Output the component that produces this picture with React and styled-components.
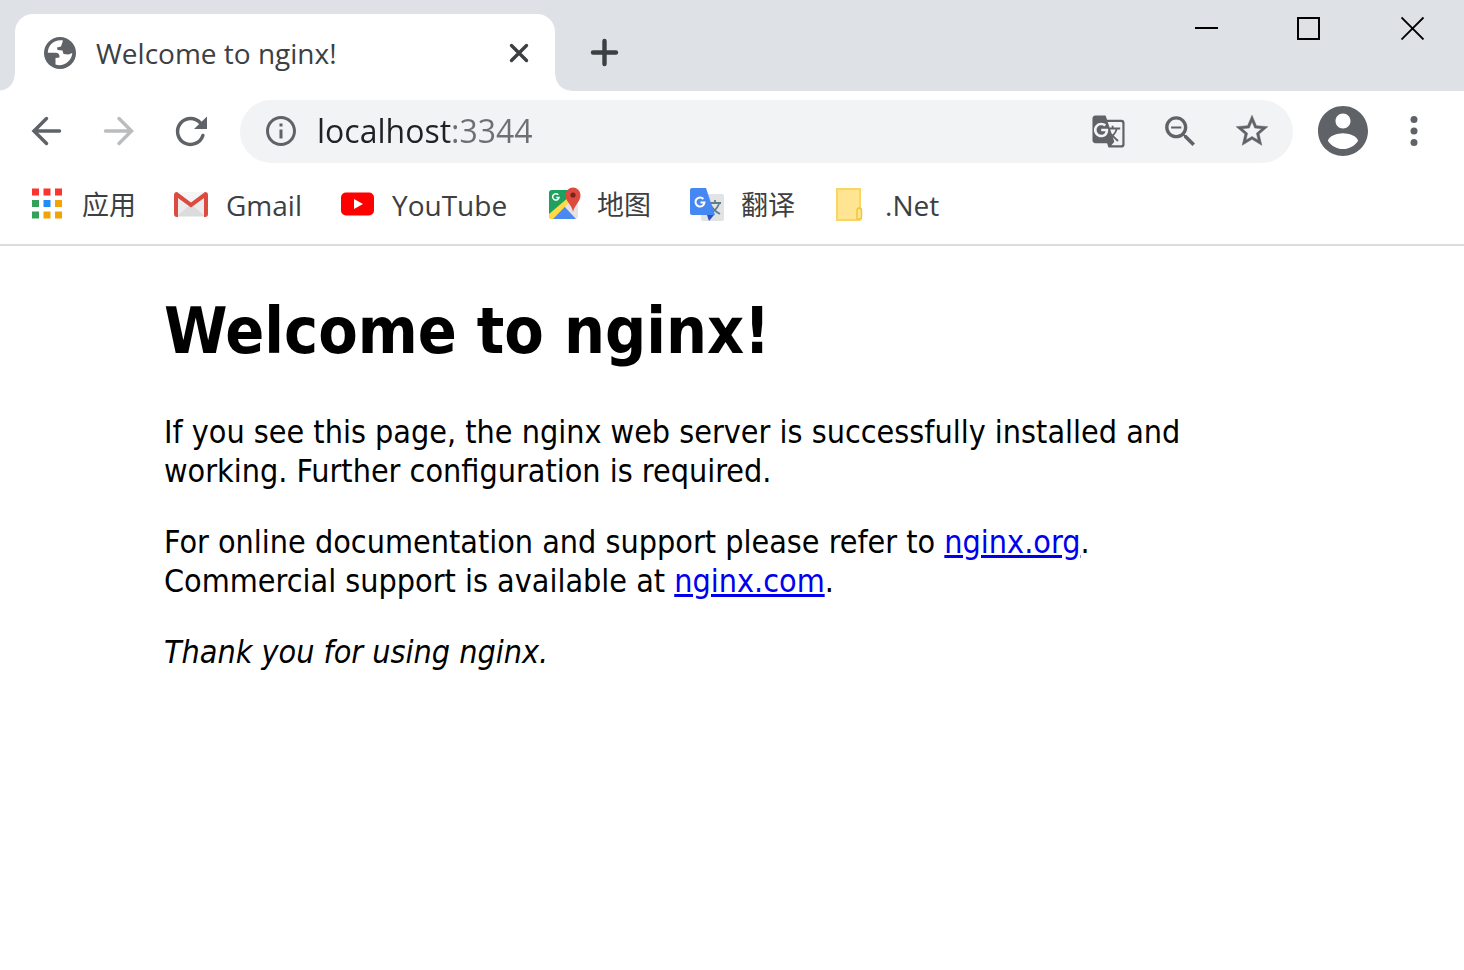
import React from "react";
import styled, { createGlobalStyle } from "styled-components";
import { MdGTranslate } from "react-icons/md";

const uiFont = `"Open Sans", "Noto Sans CJK SC", sans-serif`;

const GlobalStyle = createGlobalStyle`
  * { box-sizing: border-box; }
  body { margin: 0; background: #fff; }
`;

const Browser = styled.div`
  display: flex;
  flex-direction: column;
  min-height: 100vh;
  font-family: ${uiFont};
  color: #3c4043;
`;

const PlainButton = styled.button`
  display: flex;
  align-items: center;
  justify-content: center;
  flex: none;
  padding: 0;
  border: 0;
  background: transparent;
  color: inherit;
  font: inherit;

  svg {
    flex: none;
  }
`;

const TabStrip = styled.header`
  display: flex;
  height: 91px;
  padding: 14px 0 0 15px;
  background: #dee1e6;
`;

const Tab = styled.div`
  position: relative;
  display: flex;
  align-items: center;
  width: 540px;
  padding: 0 20px 0 29px;
  border-radius: 18px 18px 0 0;
  background: #fff;

  &::before,
  &::after {
    content: "";
    position: absolute;
    bottom: 0;
    width: 16px;
    height: 16px;
  }
  &::before {
    right: 100%;
    background: radial-gradient(circle at 0 0, transparent 15px, #fff 16px);
  }
  &::after {
    left: 100%;
    background: radial-gradient(circle at 100% 0, transparent 15px, #fff 16px);
  }
`;

const TabTitle = styled.span`
  flex: 1;
  margin-left: 20px;
  font-size: 28px;
  line-height: 40px;
  white-space: nowrap;
`;

const TabButton = styled(PlainButton)`
  width: 32px;
  height: 32px;
`;

const NewTabButton = styled(PlainButton)`
  width: 36px;
  height: 76px;
  margin-left: 31px;
`;

const WindowControls = styled.div`
  display: flex;
  height: 28px;
  margin-left: auto;
`;

const WindowButton = styled(PlainButton)`
  width: 103px;
`;

const Toolbar = styled.div`
  display: flex;
  align-items: center;
  height: 80px;
  padding: 0 32px 0 28px;
`;

const NavButton = styled(PlainButton)`
  width: 36px;
  height: 36px;
  margin-right: 36px;
  color: ${(p) => (p.disabled ? "#babcbe" : "#5f6368")};
`;

const Omnibox = styled.form`
  display: flex;
  align-items: center;
  flex: 1;
  height: 63px;
  margin-left: -4px;
  padding: 0 23px;
  border-radius: 32px;
  background: #f1f3f4;
  color: #5f6368;
`;

const Address = styled.input`
  flex: 1;
  min-width: 0;
  height: 48px;
  margin-left: 18px;
  padding: 0 0 2px;
  border: 0;
  outline: 0;
  background: linear-gradient(to right, #202124 136px, #6c7074 136px);
  background-clip: text;
  -webkit-text-fill-color: transparent;
  font-family: ${uiFont};
  font-size: 32px;
`;

const OmniButton = styled(PlainButton)`
  width: 36px;
  height: 36px;
  margin-left: ${(p) => (p.$first ? 0 : 36)}px;
`;

const ProfileButton = styled(PlainButton)`
  width: 60px;
  height: 60px;
  margin: 0 23px 0 20px;
  color: #5f6368;
`;

const MenuButton = styled(PlainButton)`
  width: 36px;
  height: 36px;
  color: #5f6368;
`;

const BookmarksBar = styled.nav`
  display: flex;
  align-items: center;
  gap: 38px;
  height: 75px;
  padding: 0 30px 6px;
  border-bottom: 2px solid #dadce0;
`;

const Bookmark = styled.a`
  display: flex;
  align-items: flex-start;
  gap: 16px;
  color: #3c4043;
  font-size: 28px;
  line-height: 38px;
  white-space: nowrap;
  text-decoration: none;

  &:lang(zh) {
    font-size: 27px;
  }
`;

const Page = styled.main`
  width: 100%;
  max-width: 1136px;
  margin: 0 auto;
  color: #000;
  font-family: "DejaVu Sans Condensed", "Noto Sans", sans-serif;
  font-size: 32px;
  line-height: 39px;
`;

const Heading = styled.h1`
  margin: 45px 0 42px;
  font-size: 64px;
  line-height: 80px;
`;

const Paragraph = styled.p`
  margin: 0 0 32px;
`;

const PageLink = styled.a`
  color: #0000ee;
`;

const Svg = ({ size = 36, box = 24, children, ...rest }) => (
  <svg width={size} height={size} viewBox={`0 0 ${box} ${box}`} fill="currentColor" aria-hidden="true" {...rest}>
    {children}
  </svg>
);

const stroke = { fill: "none", stroke: "currentColor", strokeLinecap: "round" };

const GlobeIcon = () => (
  <Svg size={32} box={32} color="#5f6368">
    <circle cx="16" cy="16" r="16" />
    <path
      fill="#fff"
      d="M19 3.500C11 2 4 7.500 3.800 15.800H11.500C14.500 15.800 15.800 17.500 15.500 20.500L11.500 21V27.500C19 30 27.500 25 28.300 16L24.500 17.500L19.500 17L18.500 13.500L13.500 13L13 10.500L17 9.500Z"
    />
  </Svg>
);

const AppsIcon = () => {
  const colors = ["#f9352f", "#f9352f", "#f9352f", "#33a15a", "#1f8cf8", "#f3a303", "#33a15a", "#f3a303", "#f3a303"];
  return (
    <Svg size={36} box={36}>
      {colors.map((c, i) => (
        <rect key={i} x={2 + (i % 3) * 11.5} y={2.5 + Math.floor(i / 3) * 11.5} width="7" height="7" fill={c} />
      ))}
    </Svg>
  );
};

const GmailIcon = () => (
  <Svg size={36} box={36}>
    <rect x="1" y="6" width="32" height="25" rx="2" fill="#ececec" />
    <path d="M3 30L17 18L31 30Z" fill="#dcdcdc" />
    <path d="M3 8L17 20L31 8V6H3Z" fill="#f5f5f5" />
    <path d="M0 9Q0 6 3 6L17 16.500L31 6Q34 6 34 9V28Q34 31 31 31H30V12L17 21.500L4 12V31H3Q0 31 0 28Z" fill="#db4b3f" />
  </Svg>
);

const YouTubeIcon = () => (
  <Svg size={36} box={36}>
    <rect x="1" y="6.500" width="33" height="23" rx="5" fill="#f00" />
    <path d="M14 13V23L23 18Z" fill="#fff" />
  </Svg>
);

const MapsIcon = () => (
  <Svg size={36} box={36}>
    <rect x="4" y="4" width="29" height="29" rx="3" fill="#e4e4e4" />
    <path d="M7 4H25L23 15L4 32V7Q4 4 7 4Z" fill="#1fa05f" />
    <path d="M5 33L19 20L31 33Z" fill="#4a89f4" />
    <path d="M4 28L24 11L25.500 15L8 33H6Q4 33 4 31Z" fill="#ffda45" />
    <path d="M13.300 8.800A3.200 3.200 0 1 0 14 11.500H11.300" fill="none" stroke="#fff" strokeWidth="1.500" />
    <path d="M28 26C27 19 20.500 15.500 20.500 9A7.500 7.500 0 0 1 35.500 9C35.500 15.500 29.500 19 28 26Z" fill="#dc4b3e" />
    <circle cx="28" cy="9" r="2.600" fill="#7a231d" />
  </Svg>
);

const TranslateIcon = () => (
  <Svg size={36} box={36}>
    <rect x="12" y="8" width="23" height="27" rx="2" fill="#e2e3e4" />
    <path d="M20 17H32M26 14V17M21.500 19Q25 25 31 28M30 18Q27 25 20 28" fill="none" stroke="#607d8b" strokeWidth="1.800" />
    <path d="M18 29H25L20 35Z" fill="#304fbe" />
    <path d="M3 2H17L26 29H4Q1 29 1 27V4Q1 2 3 2Z" fill="#4587f3" />
    <path d="M14.400 13A4.500 4.500 0 1 0 15.500 16.500H11.500" fill="none" stroke="#fff" strokeWidth="2" />
  </Svg>
);

const FolderIcon = () => (
  <Svg size={36} box={36}>
    <path d="M4 3H27V23H28V32Q28 34 26 34H4Z" fill="#ffe491" stroke="#f7d664" strokeWidth="2" />
    <path d="M24 33V25Q24 22 26 22Q28.500 22 28.500 25V31Q28.500 33 26.500 33Z" fill="#ffe491" stroke="#f0c63d" strokeWidth="1.500" />
  </Svg>
);

const bookmarks = [
  { label: "应用", lang: "zh", Icon: AppsIcon },
  { label: "Gmail", lang: "en", Icon: GmailIcon },
  { label: "YouTube", lang: "en", Icon: YouTubeIcon },
  { label: "地图", lang: "zh", Icon: MapsIcon },
  { label: "翻译", lang: "zh", Icon: TranslateIcon },
  { label: ".Net", lang: "en", Icon: FolderIcon },
];

export default function App() {
  return (
    <Browser>
      <GlobalStyle />
      <TabStrip>
        <Tab>
          <GlobeIcon />
          <TabTitle>Welcome to nginx!</TabTitle>
          <TabButton aria-label="Close tab">
            <Svg size={32} box={32}>
              <path d="M8.500 8.500L23.500 23.500M23.500 8.500L8.500 23.500" {...stroke} strokeWidth="3.400" />
            </Svg>
          </TabButton>
        </Tab>
        <NewTabButton aria-label="New tab">
          <Svg box={36}>
            <path d="M18.500 7V30M7 18.500H30" {...stroke} strokeWidth="4.400" />
          </Svg>
        </NewTabButton>
        <WindowControls>
          <WindowButton aria-label="Minimize">
            <Svg size={24} color="#000"><path d="M0 11H23V13H0Z" /></Svg>
          </WindowButton>
          <WindowButton aria-label="Maximize">
            <Svg size={24} color="#000" overflow="visible"><path d="M0 2H21V23H0Z" fill="none" stroke="#000" strokeWidth="2" /></Svg>
          </WindowButton>
          <WindowButton aria-label="Close window">
            <Svg size={24} color="#000"><path d="M0.500 1.500L22.500 23.500M22.500 1.500L0.500 23.500" fill="none" stroke="#000" strokeWidth="1.800" /></Svg>
          </WindowButton>
        </WindowControls>
      </TabStrip>

      <Toolbar>
        <NavButton aria-label="Back">
          <Svg box={36}><path d="M31.500 18H6.500M18.500 5.500L6 18L18.500 30.500" {...stroke} strokeWidth="3.500" /></Svg>
        </NavButton>
        <NavButton aria-label="Forward" disabled>
          <Svg box={36}><path d="M5.500 18H30.500M19 5.500L31.500 18L19 30.500" {...stroke} strokeWidth="3.500" /></Svg>
        </NavButton>
        <NavButton aria-label="Reload">
          <Svg box={36}>
            <path d="M28 9.500A13 13 0 1 0 30.900 22.500" {...stroke} strokeWidth="3.500" />
            <path d="M35 3.500V16H22Z" />
          </Svg>
        </NavButton>
        <Omnibox onSubmit={(e) => e.preventDefault()}>
          <OmniButton type="button" $first aria-label="View site information">
            <Svg><path d="M11 7h2v2h-2zm0 4h2v6h-2zm1-9C6.480 2 2 6.480 2 12s4.480 10 10 10 10-4.480 10-10S17.520 2 12 2zm0 18c-4.410 0-8-3.590-8-8s3.590-8 8-8 8 3.590 8 8-3.590 8-8 8z" /></Svg>
          </OmniButton>
          <Address aria-label="Address" defaultValue="localhost:3344" spellCheck={false} />
          <OmniButton type="button" aria-label="Translate this page"><MdGTranslate size={35} /></OmniButton>
          <OmniButton type="button" aria-label="Zoom out">
            <Svg size={41}><path d="M15.500 14h-.79l-.28-.27C15.410 12.590 16 11.110 16 9.500 16 5.910 13.090 3 9.500 3S3 5.910 3 9.500 5.910 16 9.500 16c1.610 0 3.090-.59 4.230-1.570l.27.28v.79l5 4.990L20.490 19l-4.990-5zm-6 0C7.010 14 5 11.990 5 9.500S7.010 5 9.500 5 14 7.010 14 9.500 11.990 14 9.500 14zM6.500 9h6v1.200h-6z" /></Svg>
          </OmniButton>
          <OmniButton type="button" aria-label="Bookmark this page">
            <Svg size={38}><path d="M22 9.240l-7.190-.62L12 2 9.190 8.630 2 9.240l5.460 4.730L5.820 21 12 17.270 18.180 21l-1.630-7.030L22 9.240zM12 15.400l-3.760 2.270 1-4.280-3.320-2.880 4.380-.38L12 6.100l1.710 4.040 4.380.38-3.320 2.880 1 4.280L12 15.400z" stroke="currentColor" strokeWidth="0.300" /></Svg>
          </OmniButton>
        </Omnibox>
        <ProfileButton aria-label="Profile">
          <Svg size={60}><path d="M12 2C6.480 2 2 6.480 2 12s4.480 10 10 10 10-4.480 10-10S17.520 2 12 2zm0 3c1.660 0 3 1.340 3 3s-1.340 3-3 3-3-1.340-3-3 1.340-3 3-3zm0 14.200c-2.500 0-4.710-1.280-6-3.220.03-1.990 4-3.080 6-3.080 1.990 0 5.970 1.090 6 3.080-1.290 1.940-3.500 3.220-6 3.220z" /></Svg>
        </ProfileButton>
        <MenuButton aria-label="Menu">
          <Svg box={36}><circle cx="18" cy="6.500" r="3.500" /><circle cx="18" cy="18" r="3.500" /><circle cx="18" cy="29.500" r="3.500" /></Svg>
        </MenuButton>
      </Toolbar>

      <BookmarksBar aria-label="Bookmarks">
        {bookmarks.map(({ label, lang, Icon }) => (
          <Bookmark key={label} href="#" lang={lang}>
            <Icon />
            {label}
          </Bookmark>
        ))}
      </BookmarksBar>

      <Page>
        <Heading>Welcome to nginx!</Heading>
        <Paragraph>
          If you see this page, the nginx web server is successfully installed and working. Further configuration is
          required.
        </Paragraph>
        <Paragraph>
          For online documentation and support please refer to <PageLink href="http://nginx.org/">nginx.org</PageLink>.
          <br />
          Commercial support is available at <PageLink href="http://nginx.com/">nginx.com</PageLink>.
        </Paragraph>
        <Paragraph>
          <em>Thank you for using nginx.</em>
        </Paragraph>
      </Page>
    </Browser>
  );
}
